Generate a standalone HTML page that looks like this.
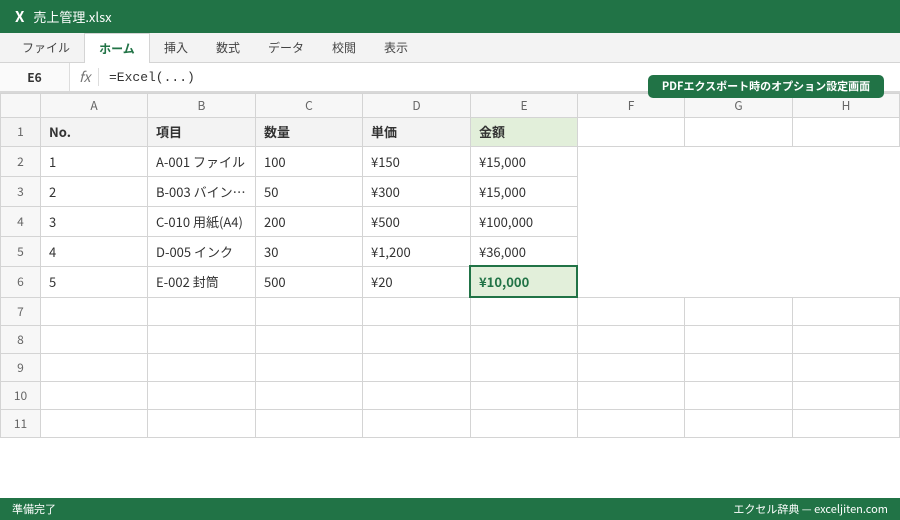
<!DOCTYPE html>
<html><head><meta charset="utf-8"><style>
*{margin:0;padding:0;box-sizing:border-box}
body{width:900px;height:520px;overflow:hidden;background:#fff;font-family:"Noto Sans CJK JP","Liberation Sans",sans-serif;color:#333;position:relative}
.title{position:absolute;left:0;top:0;width:900px;height:33px;background:#217346;color:#fff;font-size:13px;line-height:33px;padding-left:15px}
.title b{font-size:15px;margin-right:6px}
.ribbon{position:absolute;top:33px;left:0;width:900px;height:30px;background:#f3f3f3;border-bottom:1px solid #d4d4d4}
.tab{position:absolute;top:0;height:30px;line-height:30px;font-size:12px;color:#444;text-align:center}
.tab.act{background:#fff;border:1px solid #d4d4d4;border-bottom:none;color:#217346;font-weight:bold;height:31px}
.fbar{position:absolute;top:63px;left:0;width:900px;height:30px;border-bottom:2px solid #d8d8d8;background:#fff}
.nm{position:absolute;left:0;top:0;width:70px;height:28px;line-height:30px;text-align:center;font-size:12px;font-weight:bold;background:#fafafa;border-right:1px solid #ddd}
.fx{position:absolute;left:79px;top:4px;font-style:italic;color:#777;font-size:14px}
.sep{position:absolute;left:98px;top:5px;width:1px;height:18px;background:#ddd}
.fm{position:absolute;left:109px;top:7px;font-family:"Liberation Mono",monospace;font-size:13px}
table{position:absolute;left:0;top:93px;border-collapse:collapse;table-layout:fixed}
td{border:1px solid #d4d4d4;font-size:13px;padding-left:8px;white-space:nowrap;overflow:hidden;line-height:16px}
tr.h td{background:#f7f7f7;color:#666;text-align:center;padding:0;height:24px;font-size:12px}
td.rh{background:#f7f7f7;color:#666;text-align:center;padding:0;font-size:12px}
tr.r1 td{background:#f3f3f3;font-weight:bold;height:29px}
tr.r1 td.e{background:#e2efda}
tr.r1 td.w{background:#fff}
td.no{border:none}
.badge{position:absolute;left:648px;top:75px;width:236px;height:23px;background:#217346;border-radius:5px;color:#fff;font-size:11px;font-weight:bold;text-align:center;line-height:23px}
.sel{position:absolute;left:469px;top:265px;width:109px;height:33px;border:2px solid #217346;background:#e2efda;color:#217346;font-weight:bold;font-size:13px;line-height:29px;padding-left:8px}
.status{position:absolute;left:0;top:498px;width:900px;height:22px;background:#217346;color:#fff;font-size:11px;line-height:22px;padding:0 12px}
.status span{float:right}
</style></head><body>
<div class="title"><b>X</b> 売上管理.xlsx</div>
<div class="ribbon">
<div class="tab" style="left:10px;width:72px">ファイル</div>
<div class="tab act" style="left:84px;width:66px">ホーム</div>
<div class="tab" style="left:152px;width:48px">挿入</div>
<div class="tab" style="left:204px;width:48px">数式</div>
<div class="tab" style="left:256px;width:60px">データ</div>
<div class="tab" style="left:320px;width:48px">校閲</div>
<div class="tab" style="left:372px;width:48px">表示</div>
</div>
<div class="fbar"><div class="nm">E6</div><div class="fx">fx</div><div class="sep"></div><div class="fm">=Excel(...)</div></div>
<table>
<colgroup><col style="width:40px"><col style="width:107px"><col style="width:108px"><col style="width:107px"><col style="width:108px"><col style="width:107px"><col style="width:107px"><col style="width:108px"><col style="width:107px"></colgroup>
<tr class="h"><td></td><td>A</td><td>B</td><td>C</td><td>D</td><td>E</td><td>F</td><td>G</td><td>H</td></tr>
<tr class="r1"><td class="rh" style="font-weight:normal">1</td><td>No.</td><td>項目</td><td>数量</td><td>単価</td><td class="e">金額</td><td class="w"></td><td class="w"></td><td class="w"></td></tr>
<tr style="height:30px"><td class="rh">2</td><td>1</td><td>A-001 ファイル</td><td>100</td><td>¥150</td><td>¥15,000</td><td class="no" colspan="3"></td></tr>
<tr style="height:30px"><td class="rh">3</td><td>2</td><td>B-003 バイン…</td><td>50</td><td>¥300</td><td>¥15,000</td><td class="no" colspan="3"></td></tr>
<tr style="height:30px"><td class="rh">4</td><td>3</td><td>C-010 用紙(A4)</td><td>200</td><td>¥500</td><td>¥100,000</td><td class="no" colspan="3"></td></tr>
<tr style="height:30px"><td class="rh">5</td><td>4</td><td>D-005 インク</td><td>30</td><td>¥1,200</td><td>¥36,000</td><td class="no" colspan="3"></td></tr>
<tr style="height:31px"><td class="rh">6</td><td>5</td><td>E-002 封筒</td><td>500</td><td>¥20</td><td></td><td class="no" colspan="3"></td></tr>
<tr style="height:28px"><td class="rh">7</td><td></td><td></td><td></td><td></td><td></td><td></td><td></td><td></td></tr>
<tr style="height:28px"><td class="rh">8</td><td></td><td></td><td></td><td></td><td></td><td></td><td></td><td></td></tr>
<tr style="height:28px"><td class="rh">9</td><td></td><td></td><td></td><td></td><td></td><td></td><td></td><td></td></tr>
<tr style="height:28px"><td class="rh">10</td><td></td><td></td><td></td><td></td><td></td><td></td><td></td><td></td></tr>
<tr style="height:28px"><td class="rh">11</td><td></td><td></td><td></td><td></td><td></td><td></td><td></td><td></td></tr>
</table>
<div class="sel">¥10,000</div>
<div class="badge">PDFエクスポート時のオプション設定画面</div>
<div class="status">準備完了<span>エクセル辞典 — exceljiten.com</span></div>
</body></html>
